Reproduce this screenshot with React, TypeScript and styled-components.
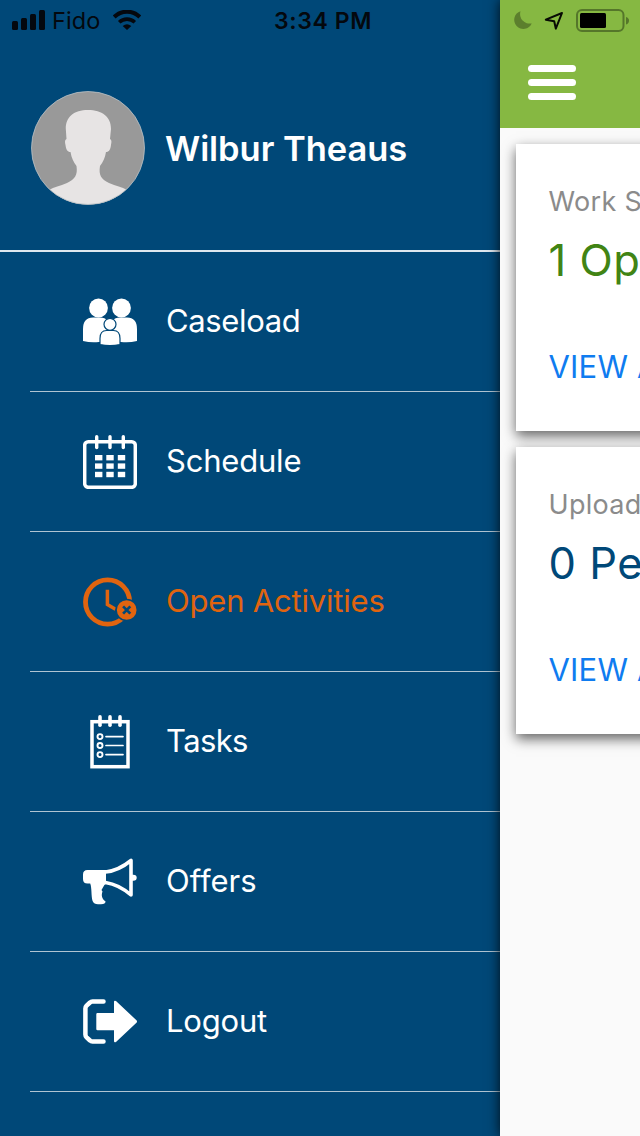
import React from "react";
import styled, { createGlobalStyle } from "styled-components";

const GlobalStyle = createGlobalStyle`
  *, *::before, *::after { box-sizing: border-box; }
  body { margin: 0; font-family: Inter, "Liberation Sans", sans-serif; -webkit-font-smoothing: antialiased; }
`;

const NAVY = "#004878";
const ORANGE = "#e0640f";

const Screen = styled.div`
  display: flex;
  width: 640px;
  height: 1136px;
  overflow: hidden;
  background: ${NAVY};
`;

const Drawer = styled.nav`
  flex: 0 0 500px;
  display: flex;
  flex-direction: column;
  background: ${NAVY};
  color: #fff;
`;

const StatusBar = styled.div`
  display: flex;
  align-items: center;
  height: 40px;
  padding-left: 12px;
  color: #04080e;
  font-size: 24px;
  line-height: 40px;
  white-space: nowrap;
`;

const Carrier = styled.span`
  width: 50px;
  margin: 1px 11px 0 7px;
  font-size: 23.5px;
  letter-spacing: 0.1px;
`;

const Time = styled.span`
  margin: 1px 0 0 133px;
  font-size: 23px;
  font-weight: 600;
  letter-spacing: 0.6px;
`;

const Profile = styled.header`
  display: flex;
  align-items: center;
  gap: 20px;
  height: 212px;
  padding: 6px 0 0 31px;
  border-bottom: 2px solid #dfe8ef;
`;

const UserName = styled.h1`
  margin: 1px 0 0;
  font-size: 34.5px;
  font-weight: 600;
  line-height: 44px;
  letter-spacing: -0.05px;
  white-space: nowrap;
`;

const Menu = styled.ul`
  list-style: none;
  margin: 0;
  padding: 0 0 0 30px;
`;

const MenuItem = styled.li<{ $active?: boolean }>`
  display: flex;
  align-items: center;
  gap: 29px;
  height: 140px;
  padding-left: 53px;
  border-bottom: 1px solid #b0c4d2;
  color: ${(p) => (p.$active ? ORANGE : "#fff")};
`;

const MenuLabel = styled.span<{ $tracking: number }>`
  margin-bottom: 2px;
  font-size: 31px;
  line-height: 40px;
  letter-spacing: ${(p) => p.$tracking}px;
  white-space: nowrap;
`;

const Main = styled.main`
  position: relative;
  flex: 0 0 140px;
  display: flex;
  flex-direction: column;
  overflow: visible;
  background: #fafafa;
  box-shadow: 0 0 12px rgba(0, 0, 0, 0.85);
`;

const AppBar = styled.header`
  flex: 0 0 128px;
  background: #86b842;
`;

const StatusIcons = styled.div`
  height: 40px;
  display: flex;
`;

const MenuButton = styled.button`
  display: flex;
  flex-direction: column;
  gap: 7px;
  margin: 25px 0 0 28px;
  padding: 0;
  border: 0;
  background: none;
`;

const Bar = styled.span`
  width: 48px;
  height: 7px;
  border-radius: 3.5px;
  background: #fff;
`;

const Cards = styled.section`
  display: flex;
  flex-direction: column;
  gap: 16px;
  padding: 16px 0 0 16px;
  overflow: hidden;
  flex: 1;
`;

const Card = styled.article`
  width: 608px;
  height: 287px;
  padding: 38px 0 0 32.5px;
  background: #fff;
  box-shadow: 0 5px 12px rgba(0, 0, 0, 0.6);
  white-space: nowrap;
`;

const CardTitle = styled.div`
  height: 40px;
  color: #8b8b8b;
  font-size: 27px;
  line-height: 40px;
  letter-spacing: 0.3px;
`;

const CardValue = styled.div<{ $color: string }>`
  height: 64px;
  margin-top: 6px;
  color: ${(p) => p.$color};
  font-size: 43.5px;
  line-height: 64px;
  letter-spacing: 0.5px;
`;

const CardLink = styled.div`
  margin-top: 55px;
  color: #0f7cf0;
  font-size: 31px;
  line-height: 40px;
  letter-spacing: 0.2px;
`;

const CaseloadIcon = () => (
  <svg width="54" height="54" viewBox="0 0 54 54" fill="#fff">
    <circle cx="15.5" cy="13" r="9.4" />
    <circle cx="38.5" cy="13" r="9.4" />
    <path d="M0 46V34Q0 22.4 10 22.4H17Q22 22.4 24.5 25.5L27 28L29.5 25.5Q32 22.4 37 22.4H44Q54 22.4 54 34V46Q46 48 38 47H16Q8 48 0 46Z" />
    <g stroke={NAVY} strokeWidth="1.2">
      <path d="M17 49.6V43.5Q17 35.5 23.5 35.5H30.5Q37 35.5 37 43.5V49.6Q27 51.5 17 49.6Z" />
      <circle cx="27" cy="29.3" r="6" />
    </g>
  </svg>
);

const ScheduleIcon = () => (
  <svg width="54" height="54" viewBox="0 0 54 54" fill="#fff">
    <rect x="1.7" y="6.7" width="50.6" height="45.6" rx="3.5" fill="none" stroke="#fff" strokeWidth="3.5" />
    {[13.7, 27, 40.3].map((x) => (
      <path key={x} d={`M${x} 1.8V12.5`} stroke="#fff" strokeWidth="3.4" strokeLinecap="round" />
    ))}
    {[20, 28.4, 36.8].map((y) =>
      [12, 23.3, 34.8].map((x) => <rect key={`${x}-${y}`} x={x} y={y} width="7.4" height="5.4" />)
    )}
  </svg>
);

const ActivitiesIcon = () => (
  <svg width="54" height="54" viewBox="0 0 54 54" fill="none" stroke={ORANGE}>
    <circle cx="24.6" cy="27" r="22.1" strokeWidth="4.8" />
    <path d="M24.4 14.7V29.5L32.5 34.2" strokeWidth="3.5" />
    <circle cx="43.7" cy="35" r="10.6" fill={ORANGE} stroke={NAVY} strokeWidth="1.5" />
    <path d="M40.1 31.4L47.3 38.6M47.3 31.4L40.1 38.6" stroke={NAVY} strokeWidth="2.7" />
  </svg>
);

const TasksIcon = () => (
  <svg width="54" height="54" viewBox="0 0 54 54" fill="none" stroke="#fff">
    <rect x="9" y="6.7" width="36" height="45" strokeWidth="3.5" />
    {[17, 27, 37].map((x) => (
      <path key={x} d={`M${x} 1.9V10.3`} strokeWidth="3.6" strokeLinecap="round" />
    ))}
    {[21.6, 30.5, 39.6].map((y) => (
      <g key={y} strokeWidth="1.9">
        <circle cx="17" cy={y} r="2.5" />
        <path d={`M23 ${y}H40`} strokeWidth="1.7" strokeLinecap="round" />
      </g>
    ))}
  </svg>
);

const OffersIcon = () => (
  <svg width="54" height="54" viewBox="0 0 54 54" fill="#fff">
    <path d="M23 15H4.5Q0 15 0 19.5V24Q0 28.5 4.5 28.5H7.2C9 33 8 41 9.6 46Q11 49.3 15 49.3H18Q22.6 49 22.6 46.5C19 44 18 40.5 19.5 36.5L18.5 35L20.5 31.5Q21 29.5 23 29Z" />
    <path d="M22.5 17C32 16 40 12 48 5.5V40C40 33 32 29 22.5 27.5" fill="none" stroke="#fff" strokeWidth="3.6" strokeLinejoin="round" />
    <path d="M48.8 19.8H50.3Q53.7 19.8 53.7 22.8Q53.7 25.8 50.3 25.8H48.8Z" />
  </svg>
);

const LogoutIcon = () => (
  <svg width="54" height="54" viewBox="0 0 54 54" fill="#fff">
    <path d="M20.5 6.5H9.5Q8 6.5 7 7.5L3.6 10.6Q2.4 11.8 2.4 13.5V39.5Q2.4 41.2 3.6 42.4L7 45.5Q8 46.5 9.5 46.5H20.5" fill="none" stroke="#fff" strokeWidth="4.5" strokeLinejoin="round" strokeLinecap="round" />
    <path d="M14.5 18H31V7Q31 5 33 6L53.7 25.5Q54.3 26.7 53.7 27.5L33 47Q31 48 31 46V35.3H14.5Q13.3 35.3 13.3 34V19.3Q13.3 18 14.5 18Z" />
  </svg>
);

const SignalIcon = () => (
  <svg width="33" height="21" viewBox="0 0 33 21" fill="currentColor">
    <rect x="0" y="11" width="6" height="9" rx="1.5" />
    <rect x="9" y="8" width="6" height="12" rx="1.5" />
    <rect x="18" y="4" width="6" height="16" rx="1.5" />
    <rect x="27" y="0" width="6" height="20" rx="1.5" />
  </svg>
);

const WifiIcon = () => (
  <svg width="28" height="20" viewBox="0 0 28 20" fill="none" stroke="currentColor" strokeWidth="4">
    <path d="M1.2 7A18 18 0 0 1 26.8 7" />
    <path d="M6.2 12.2A11.3 11.3 0 0 1 21.8 12.2" strokeWidth="3.6" />
    <path d="M14 20L9.7 15.9Q14 12.4 18.3 15.9Z" fill="currentColor" stroke="none" />
  </svg>
);

const DeviceIcons = () => (
  <svg width="140" height="40" viewBox="0 0 140 40">
    <path d="M20.5 11.2A9.1 9.1 0 1 0 31.7 23.4A9.6 9.6 0 0 1 20.5 11.2Z" fill="#5c7f2d" />
    <path d="M45.8 19.7L62 13L55.8 28.6L54.2 21.2Z" fill="none" stroke="#080b04" strokeWidth="2" strokeLinejoin="round" />
    <rect x="77" y="10" width="46.5" height="21" rx="5" fill="none" stroke="#55762a" strokeWidth="2" />
    <rect x="80" y="13" width="26" height="15" rx="1.5" fill="#000" />
    <path d="M126 17Q129 18 129 20.5Q129 23.5 126 24.5Z" fill="#55762a" />
  </svg>
);

const Avatar = () => (
  <svg width="114" height="114" viewBox="0 0 114 114">
    <defs>
      <clipPath id="avatar-circle">
        <circle cx="57" cy="57" r="56.5" />
      </clipPath>
    </defs>
    <g clipPath="url(#avatar-circle)">
      <rect width="114" height="114" fill="#999" />
      <path
        fill="#e7e4e4"
        d="M57 19C43 19 34.5 26 34.8 38L35.5 48C33.5 49 34 51.5 34.5 54C35 58.5 36.5 61 39.5 61C40.5 67 42.5 71 45.5 75C46.8 84 44 88 36 92C29 95 23 96 18 99V114H96V99C91 96 85 95 78 92C70 88 67.5 84 69 75C72 71 74 67 75 61C78 61 79.5 58.5 80 54C80.5 51.5 81 49 79 48L80 38C80.3 26 71 19 57 19Z"
      />
    </g>
    <circle cx="57" cy="57" r="56.5" fill="none" stroke="#b7c0c5" strokeWidth="0.8" />
  </svg>
);

const items = [
  { label: "Caseload", Icon: CaseloadIcon, tracking: -0.35 },
  { label: "Schedule", Icon: ScheduleIcon, tracking: -0.2 },
  { label: "Open Activities", Icon: ActivitiesIcon, tracking: -0.2, active: true },
  { label: "Tasks", Icon: TasksIcon, tracking: -0.6 },
  { label: "Offers", Icon: OffersIcon, tracking: 0 },
  { label: "Logout", Icon: LogoutIcon, tracking: -0.2 },
];

const cards = [
  { title: "Work Schedule", value: "1 Open", color: "#418414" },
  { title: "Uploads", value: "0 Pending", color: "#004878" },
];

export default function App() {
  return (
    <>
      <GlobalStyle />
      <Screen>
        <Drawer>
          <StatusBar>
            <SignalIcon />
            <Carrier>Fido</Carrier>
            <WifiIcon />
            <Time>3:34 PM</Time>
          </StatusBar>
          <Profile>
            <Avatar />
            <UserName>Wilbur Theaus</UserName>
          </Profile>
          <Menu>
            {items.map(({ label, Icon, tracking, active }) => (
              <MenuItem key={label} $active={active}>
                <Icon />
                <MenuLabel $tracking={tracking}>{label}</MenuLabel>
              </MenuItem>
            ))}
          </Menu>
        </Drawer>
        <Main>
          <AppBar>
            <StatusIcons>
              <DeviceIcons />
            </StatusIcons>
            <MenuButton aria-label="Menu">
              <Bar />
              <Bar />
              <Bar />
            </MenuButton>
          </AppBar>
          <Cards>
            {cards.map((card) => (
              <Card key={card.title}>
                <CardTitle>{card.title}</CardTitle>
                <CardValue $color={card.color}>{card.value}</CardValue>
                <CardLink>VIEW ALL</CardLink>
              </Card>
            ))}
          </Cards>
        </Main>
      </Screen>
    </>
  );
}
